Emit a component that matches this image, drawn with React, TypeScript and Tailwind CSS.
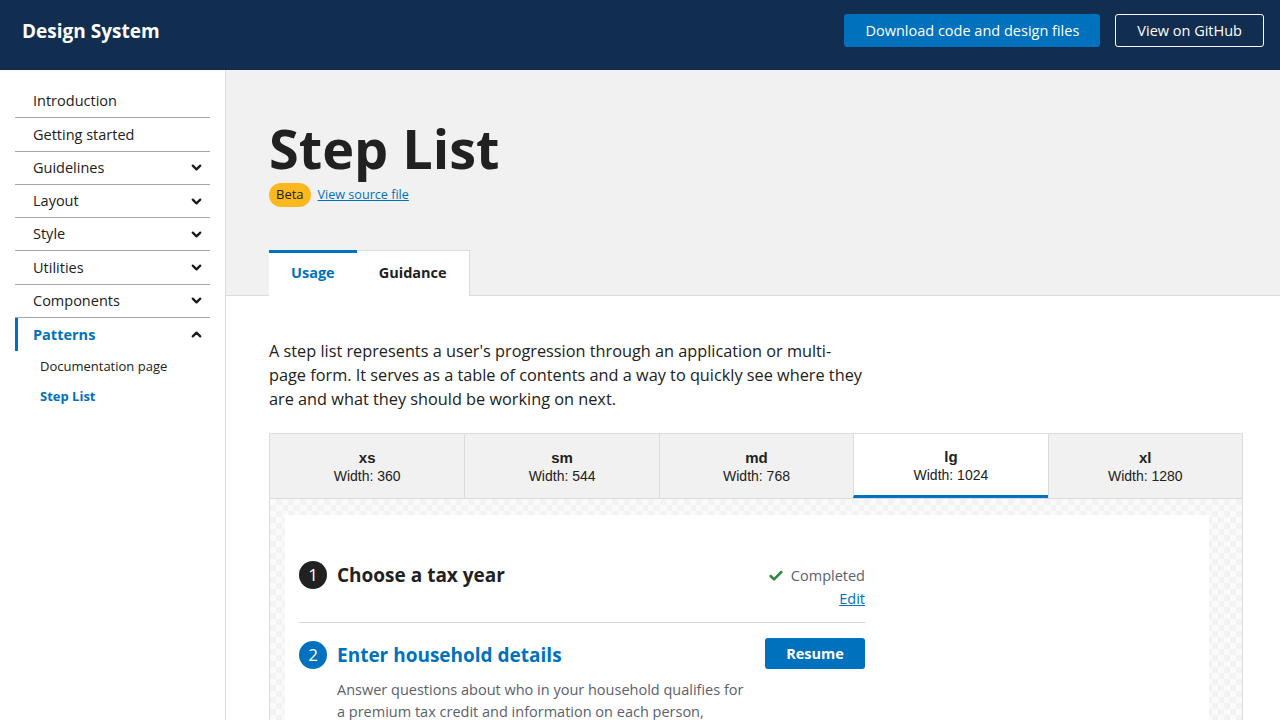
import { ChevronDown, ChevronUp, Check } from 'lucide-react';

const navItems = [
  { label: 'Introduction', chevron: false },
  { label: 'Getting started', chevron: false },
  { label: 'Guidelines', chevron: true },
  { label: 'Layout', chevron: true },
  { label: 'Style', chevron: true },
  { label: 'Utilities', chevron: true },
  { label: 'Components', chevron: true },
];

const breakpoints = [
  { id: 'xs', width: 360 },
  { id: 'sm', width: 544 },
  { id: 'md', width: 768 },
  { id: 'lg', width: 1024 },
  { id: 'xl', width: 1280 },
];

const Header = () => (
  <header className="h-[70px] bg-[#112e51] flex items-center justify-between pl-[22px] pr-[16px] pb-[9px]">
    <span className="text-white font-bold text-[19px] mt-[2px]">Design System</span>
    <div className="flex items-center gap-[15px]">
      <button
        type="button"
        className="h-[33px] px-[21px] rounded-[3px] bg-[#0071bc] text-white text-[14.5px]"
      >
        Download code and design files
      </button>
      <button
        type="button"
        className="h-[33px] px-[21px] rounded-[3px] border border-white text-white text-[14.5px]"
      >
        View on GitHub
      </button>
    </div>
  </header>
);

const Sidebar = () => (
  <aside className="w-[226px] shrink-0 border-r border-[#dcdcdc] pt-[15px] pl-[15px] pr-[15px] bg-white">
    <nav>
      {navItems.map((item) => (
        <div
          key={item.label}
          className="h-[33.3px] border-b border-[#a6a6a6] flex items-center justify-between pl-[18px] pr-[6px] text-[14.5px] text-[#212121]"
        >
          <span>{item.label}</span>
          {item.chevron && <ChevronDown className="w-[15px] h-[15px] text-[#1b1b1b]" strokeWidth={3.6} />}
        </div>
      ))}
      <div className="h-[33.3px] border-l-[3px] border-[#0071bc] flex items-center justify-between pl-[15px] pr-[6px] text-[14.5px] font-bold text-[#0071bc]">
        <span>Patterns</span>
        <ChevronUp className="w-[15px] h-[15px] text-[#1b1b1b]" strokeWidth={3.6} />
      </div>
      <div className="h-[30px] flex items-center pl-[25px] text-[13px] text-[#212121]">Documentation page</div>
      <div className="h-[30px] flex items-center pl-[25px] text-[13px] font-bold text-[#0071bc]">Step List</div>
    </nav>
  </aside>
);

const StepList = () => (
  <div className="w-[566px]">
    {/* Step 1 */}
    <div className="flex justify-between pb-[12px] border-b border-[#d6d7d9]">
      <div className="flex items-center gap-[10px] h-[28px]">
        <span className="w-[28px] h-[28px] rounded-full bg-[#212121] text-white flex items-center justify-center text-[17px]">
          1
        </span>
        <span className="text-[19px] font-bold text-[#212121]">Choose a tax year</span>
      </div>
      <div className="flex flex-col items-end mt-[3px] text-[14.5px] leading-[23px]">
        <div className="flex items-center gap-[7px] text-[#5b616b]">
          <Check className="w-[16px] h-[16px] text-[#2e8540]" strokeWidth={3.8} />
          <span>Completed</span>
        </div>
        <a className="text-[#0071bc] underline">Edit</a>
      </div>
    </div>

    {/* Step 2 */}
    <div className="pt-[15px]">
      <div className="flex justify-between">
        <div className="flex items-center gap-[10px] h-[28px] mt-[3px]">
          <span className="w-[28px] h-[28px] rounded-full bg-[#0071bc] text-white flex items-center justify-center text-[17px]">
            2
          </span>
          <span className="text-[19px] font-bold text-[#0071bc]">Enter household details</span>
        </div>
        <button
          type="button"
          className="h-[31px] w-[100px] rounded-[3px] bg-[#0071bc] text-white font-bold text-[14.5px]"
        >
          Resume
        </button>
      </div>
      <p className="ml-[38px] mt-[10px] w-[415px] text-[14.5px] leading-[22px] text-[#5b616b]">
        Answer questions about who in your household qualifies for a premium tax credit and information on each person,
        including their income and other coverage.
      </p>
    </div>
  </div>
);

const Breakpoints = () => (
  <div className="mt-[22px] border border-[#dcdcdc] w-[974px]">
    <div className="grid grid-cols-5 h-[65px] border-b border-[#dcdcdc] font-['Liberation_Sans',Arial,sans-serif] text-[#212121]">
      {breakpoints.map((bp, i) => {
        const active = bp.id === 'lg';
        return (
          <div
            key={bp.id}
            className={`flex flex-col items-center justify-center leading-[18px] pt-[2px] ${
              i > 0 ? 'border-l border-[#dcdcdc]' : ''
            } ${active ? 'bg-white border-b-[3px] border-b-[#0071bc]' : 'bg-[#f1f1f1]'}`}
          >
            <span className="font-bold text-[15px]">{bp.id}</span>
            <span className="text-[14px]">Width: {bp.width}</span>
          </div>
        );
      })}
    </div>
    <div className="bg-[#f7f7f7] bg-[image:repeating-conic-gradient(#f3f3f3_0_25%,#fafafa_0_50%)] bg-size-[12px_12px] pl-[15px] pt-[16px] h-[260px]">
      <div className="w-[924px] h-full bg-white pl-[14px] pt-[46px]">
        <StepList />
      </div>
    </div>
  </div>
);

export default function App() {
  return (
    <div className="w-[1280px] h-[720px] overflow-hidden bg-white font-['Open_Sans',sans-serif] text-[#212121]">
      <Header />
      <div className="flex">
        <Sidebar />
        <main className="flex-1 min-w-0">
          <section className="bg-[#f1f1f1] border-b border-[#dcdcdc] px-[43px] pt-[50px]">
            <h1 className="text-[54px] font-bold leading-[56px] text-[#212121]">Step List</h1>
            <div className="flex items-center gap-[7px] mt-[7px]">
              <span className="h-[24px] px-[7px] rounded-full bg-[#fdb81e] text-[13px] text-[#212121] flex items-center">
                Beta
              </span>
              <a className="text-[12.6px] text-[#0071bc] underline">View source file</a>
            </div>
            <div className="flex mt-[43px] -mb-px">
              <div className="h-[46px] px-[22px] pb-[3px] bg-white border-t-[3px] border-[#0071bc] flex items-center text-[14.5px] font-bold text-[#0071bc]">
                Usage
              </div>
              <div className="h-[46px] px-[22px] pb-[1px] bg-white border-t border-r border-[#dcdcdc] flex items-center text-[14.5px] font-bold text-[#212121]">
                Guidance
              </div>
            </div>
          </section>
          <section className="px-[43px] pt-[43px]">
            <p className="w-[595px] text-[16.3px] leading-[24px] text-[#212121]">
              A step list represents a user's progression through an application or multi-page form. It serves as a
              table of contents and a way to quickly see where they are and what they should be working on next.
            </p>
            <Breakpoints />
          </section>
        </main>
      </div>
    </div>
  );
}
